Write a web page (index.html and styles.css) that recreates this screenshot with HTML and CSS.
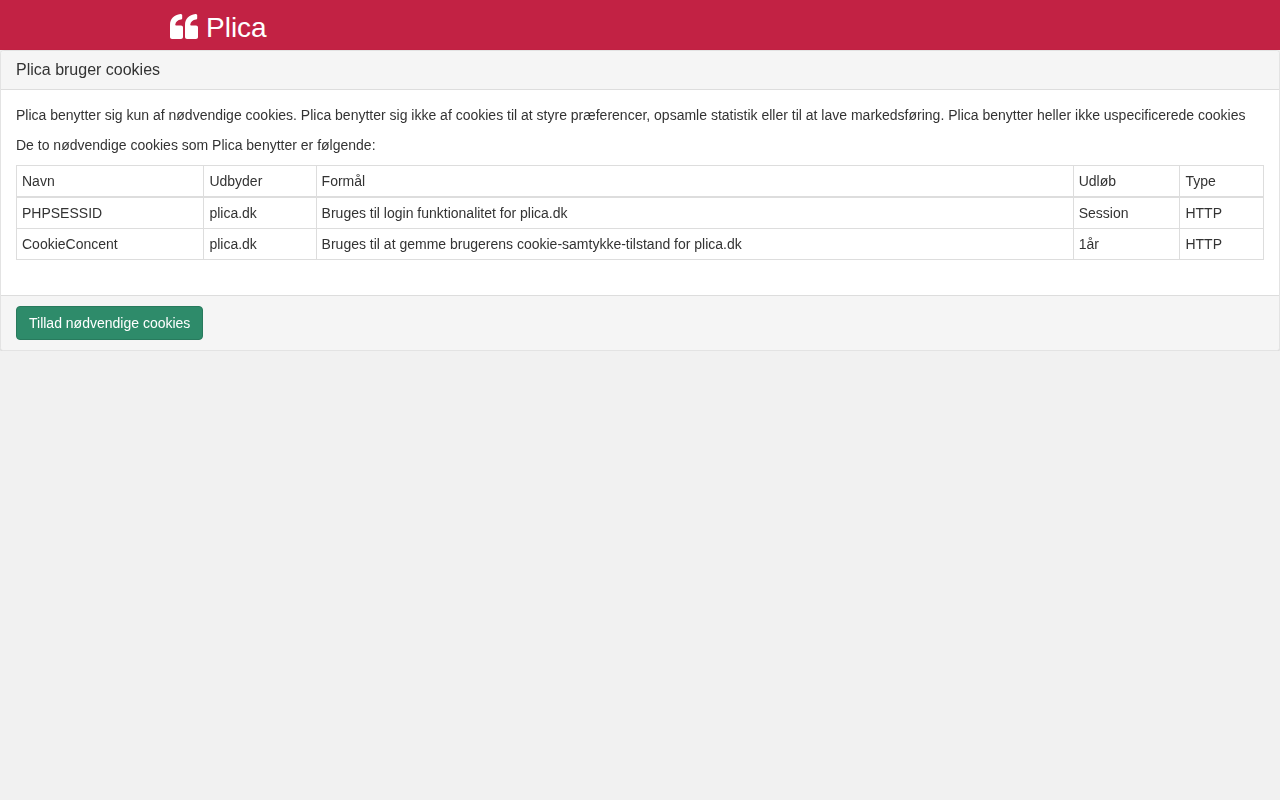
FILE: index.html
```html
<!DOCTYPE html>
<html lang="da">
<head>
<meta charset="utf-8">
<title>Plica</title>
<link rel="stylesheet" href="styles.css">
</head>
<body>
<nav class="navbar">
  <a class="brand" href="#">
    <svg class="brand-icon" viewBox="0 0 28 25" aria-hidden="true"><path d="M2 25C.9 25 0 24.100 0 23V11C0 5 4 .8 10.500 0 11.500-.1 12.200.5 12.200 1.300V4.200C12.200 4.900 11.700 5.400 11 5.500 7.800 6 5.500 7.800 5.200 11 5.700 11.400 6.200 11.500 7 11.500H11C12.200 11.500 13 12.400 13 13.500V23C13 24.100 12.100 25 11 25Z"/><path d="M17 25C15.900 25 15 24.100 15 23V11C15 5 19 .8 25.500 0 26.500-.1 27.200.5 27.200 1.300V4.200C27.200 4.900 26.700 5.400 26 5.500 22.800 6 20.500 7.800 20.200 11 20.700 11.400 21.200 11.500 22 11.500H26C27.200 11.500 28 12.400 28 13.500V23C28 24.100 27.100 25 26 25Z"/></svg>
    <span class="brand-name">Plica</span>
  </a>
</nav>
<section class="panel">
  <header class="panel-heading">Plica bruger cookies</header>
  <div class="panel-body">
    <p>Plica benytter sig kun af nødvendige cookies. Plica benytter sig ikke af cookies til at styre præferencer, opsamle statistik eller til at lave markedsføring. Plica benytter heller ikke uspecificerede cookies</p>
    <p>De to nødvendige cookies som Plica benytter er følgende:</p>
    <table class="cookie-table">
      <thead>
        <tr><th>Navn</th><th>Udbyder</th><th>Formål</th><th>Udløb</th><th>Type</th></tr>
      </thead>
      <tbody>
        <tr><td>PHPSESSID</td><td>plica.dk</td><td>Bruges til login funktionalitet for plica.dk</td><td>Session</td><td>HTTP</td></tr>
        <tr><td>CookieConcent</td><td>plica.dk</td><td>Bruges til at gemme brugerens cookie-samtykke-tilstand for plica.dk</td><td>1år</td><td>HTTP</td></tr>
      </tbody>
    </table>
  </div>
  <footer class="panel-footer">
    <button class="btn" type="button">Tillad nødvendige cookies</button>
  </footer>
</section>
</body>
</html>
```
FILE: styles.css
```css
* { box-sizing: border-box; }
html, body { margin: 0; padding: 0; }
body {
  background: #f1f1f1;
  color: #333;
  font-family: "Liberation Sans", Arial, sans-serif;
  font-size: 14px;
  line-height: 20px;
}
.navbar {
  height: 50px;
  background: #c22244;
  padding-left: 170px;
  will-change: opacity;
}
.brand {
  display: flex;
  align-items: flex-start;
  gap: 8px;
  height: 50px;
  color: #fff;
  font-size: 28px;
  line-height: 30px;
  text-decoration: none;
  width: max-content;
}
.brand-icon { width: 28px; height: 25px; margin-top: 14px; fill: #fff; display: block; }
.brand-name { margin-top: 13px; }
.panel {
  background: #fff;
  border: 1px solid #e3e3e3;
  border-radius: 4px;
  box-shadow: 0 1px 2px rgba(0,0,0,.12);
  will-change: opacity;
}
.panel-heading {
  height: 39px;
  padding: 9px 15px;
  background: #f5f5f5;
  border-bottom: 1px solid #ddd;
  border-radius: 3px 3px 0 0;
  font-size: 16px;
  line-height: 20px;
}
.panel-body { padding: 15px; }
.panel-body p { margin: 0 0 10px; }
.cookie-table {
  width: 100%;
  border-collapse: collapse;
  margin-bottom: 20px;
}
.cookie-table th, .cookie-table td {
  padding: 5px;
  border: 1px solid #ddd;
  text-align: left;
  font-weight: 400;
  vertical-align: top;
}
.cookie-table th { border-bottom-width: 2px; }
.panel-footer {
  padding: 10px 15px;
  background: #f5f5f5;
  border-top: 1px solid #ddd;
  border-radius: 0 0 3px 3px;
}
.btn {
  display: block;
  height: 34px;
  padding: 6px 12px;
  font: inherit;
  color: #fff;
  background: #2e8b6a;
  border: 1px solid #287a5d;
  border-radius: 4px;
}
```
